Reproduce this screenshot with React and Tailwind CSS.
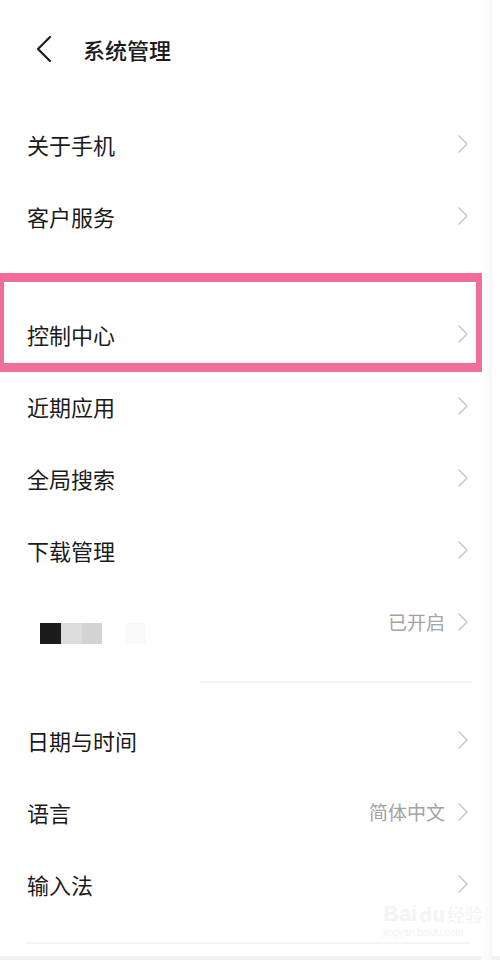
import React from 'react';

const Chevron = () => (
  <svg width="12" height="20" viewBox="0 0 12 20" fill="none" className="shrink-0">
    <path d="M2 2l8 8-8 8" stroke="#c9c9c9" strokeWidth="1.6" strokeLinecap="round" strokeLinejoin="round" />
  </svg>
);

const Row = ({ label, value, children }) => (
  <div className="h-[72px] flex items-center justify-between pl-[27px] pr-[31px] pb-[3px]">
    {children || <span className="text-[22px] text-[#1b1b1b] leading-none">{label}</span>}
    <div className="flex items-center gap-[12px]">
      {value && <span className="text-[19px] text-[#a3a3a3] leading-none">{value}</span>}
      <Chevron />
    </div>
  </div>
);

const App = () => {
  return (
    <div className="w-[500px] h-[960px] bg-white overflow-hidden relative flex flex-col" style={{ fontFamily: '"Noto Sans CJK SC", "Noto Sans", sans-serif' }}>
      <div className="h-[109px] shrink-0 flex items-start pt-[35px] pl-[35px]">
        <svg width="18" height="28" viewBox="0 0 18 28" fill="none">
          <path d="M15 2L3 14l12 12" stroke="#1e1e1e" strokeWidth="2.2" strokeLinecap="round" strokeLinejoin="round" />
        </svg>
        <span className="ml-[30px] text-[22px] font-medium text-[#1b1b1b] leading-[28px]">系统管理</span>
      </div>

      <Row label="关于手机" />
      <Row label="客户服务" />

      <div className="h-[46px] shrink-0" />

      <div className="relative">
        <Row label="控制中心" />
        <div className="absolute -top-[26px] -bottom-[1px] -left-[5px] right-[15px] border-[9px] border-[#f06f98] pointer-events-none" />
      </div>
      <Row label="近期应用" />
      <Row label="全局搜索" />
      <Row label="下载管理" />
      <Row value="已开启">
        <div className="flex items-center ml-[13px] mt-[24px]">
          <div className="w-[21px] h-[21px] bg-[#1c1c1c]" />
          <div className="w-[21px] h-[21px] bg-[#dcdcdc]" />
          <div className="w-[20px] h-[21px] bg-[#d3d3d3]" />
          <div className="w-[21px] h-[21px] bg-[#fafafa] ml-[23px]" />
        </div>
      </Row>

      <div className="h-[46px] shrink-0 flex items-center pl-[200px] pr-[28px]">
        <div className="h-[2px] w-full bg-[#f3f3f3]" />
      </div>

      <Row label="日期与时间" />
      <Row label="语言" value="简体中文" />
      <Row label="输入法" />

      <div className="h-[23px] shrink-0 flex items-end pl-[25px] pr-[30px]">
        <div className="h-[2px] w-full bg-[#f5f5f5]" />
      </div>
      <div className="flex-1 mt-[12px] bg-[#f2f2f2]" />

      <div className="absolute right-[8px] top-[0px] bottom-0 w-[10px] bg-gradient-to-r from-white to-[#f6f6f6]" />

      <div className="absolute left-[383px] top-[903px] flex flex-col items-start pointer-events-none">
        <div className="flex items-center leading-none">
          <span className="text-[22px] font-bold text-[#f4f4f4]" style={{ fontFamily: '"Liberation Sans", sans-serif' }}>Bai</span>
          <span className="text-[20px] font-bold text-[#f4f4f4] ml-[2px]">du</span>
          <span className="text-[18px] text-[#f3f3f3] ml-[2px]">经验</span>
        </div>
        <span className="text-[10px] text-[#f4f4f4] leading-none mt-[3px]" style={{ fontFamily: '"Liberation Sans", sans-serif' }}>jingyan.baidu.com</span>
      </div>
    </div>
  );
};

export default App;
